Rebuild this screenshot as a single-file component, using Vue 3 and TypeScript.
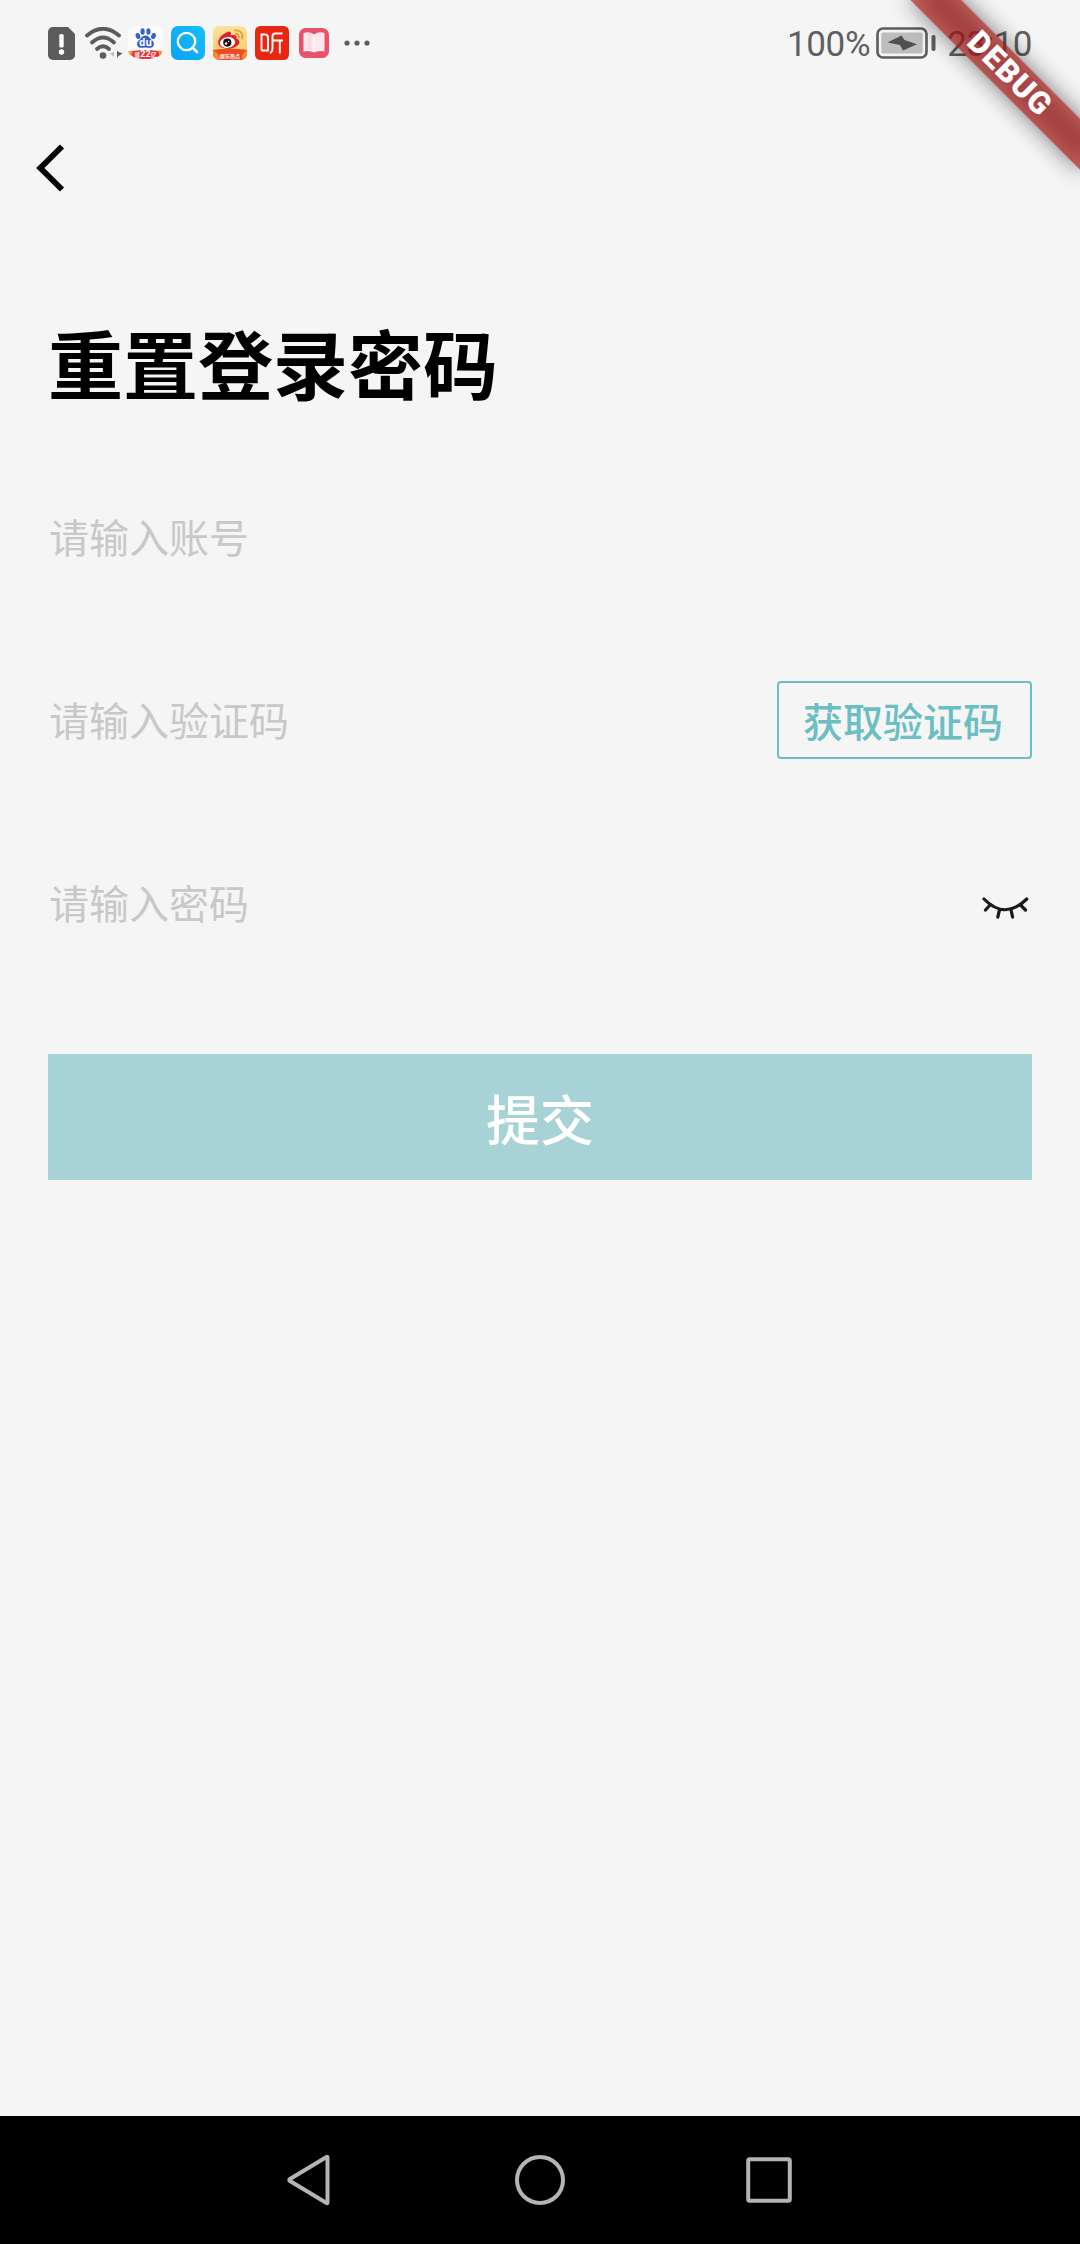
<script setup lang="ts">
import { ref } from 'vue'

const account = ref('')
const code = ref('')
const password = ref('')
</script>

<template>
  <div class="screen">
    <header class="status">
      <div class="apps">
        <svg class="warn" width="27" height="33" viewBox="0 0 27 33">
          <path d="M5 0H20L27 7V28a5 5 0 0 1-5 5H5a5 5 0 0 1-5-5V5a5 5 0 0 1 5-5Z" fill="#5c5c5c" />
          <rect x="11.3" y="7" width="4.4" height="13.5" rx="1.6" fill="#fff" />
          <circle cx="13.5" cy="25" r="2.7" fill="#fff" />
        </svg>
        <svg class="wifi" width="38" height="33" viewBox="0 0 38 33">
          <g fill="none" stroke="#5c5c5c" stroke-width="3.8" stroke-linecap="round">
            <path d="M2 8.500Q18-5 34 8.500" />
            <path d="M7 15.500Q18 5.500 29 15.500" />
            <path d="M12 22Q18 16.500 24 22" />
          </g>
          <circle cx="18" cy="28.500" r="3.300" fill="#5c5c5c" />
          <path d="M29 24.500v5l-4-2.500Z" fill="#bbb" />
          <path d="M32 23.500v7.500l1.500-2L37.500 26.500l-4-1.500Z" fill="#5c5c5c" />
        </svg>
        <svg class="baidu" width="35" height="34" viewBox="0 0 35 34">
          <rect x="0" y="0" width="35" height="34" rx="7" fill="#fbfbfc" />
          <g fill="#3563c9">
            <ellipse cx="10" cy="10" rx="2.300" ry="3.100" transform="rotate(-18 10 10)" />
            <ellipse cx="14.600" cy="5.500" rx="2.100" ry="3.300" />
            <ellipse cx="20.400" cy="5.500" rx="2.100" ry="3.300" />
            <ellipse cx="25.500" cy="10" rx="2.300" ry="3.100" transform="rotate(18 25.500 10)" />
            <path d="M17.500 9.500c4 0 4.500 3.500 6.500 4.800 2.800 2 2.700 6.700-1 7.400-2 .4-3.700-.1-5.500-.1s-3.500.5-5.500.1c-3.700-.7-3.800-5.400-1-7.400 2-1.300 2.500-4.800 6.500-4.800Z" />
          </g>
          <text x="17.500" y="20" class="du">du</text>
          <path d="M.5 25.500Q17.500 22.500 34.500 25.500 32 33 17.500 33 3 33 .5 25.500Z" fill="#e9313a" />
          <path d="M.5 25.500Q2 24.700 5 24.500L3.500 29.500Q1 27.500 .5 25.500ZM34.500 25.500Q33 24.700 30 24.500L31.500 29.500Q34 27.500 34.500 25.500Z" fill="#f59a3c" />
          <text x="17.500" y="31.300" class="promo"><tspan class="tiny">省</tspan>22<tspan class="tiny">亿</tspan></text>
        </svg>
        <svg class="search" width="34" height="34" viewBox="0 0 34 34">
          <defs>
            <linearGradient id="sky" x1="1" y1="0" x2="0" y2="1">
              <stop offset="0" stop-color="#16bffb" />
              <stop offset="1" stop-color="#0ba2f2" />
            </linearGradient>
          </defs>
          <rect width="34" height="34" rx="7" fill="url(#sky)" />
          <circle cx="15.500" cy="15.500" r="8.700" fill="none" stroke="#fff" stroke-width="2.300" />
          <path d="M21.500 21.500 26 26" stroke="#fff" stroke-width="2.500" stroke-linecap="round" />
        </svg>
        <svg class="weibo" width="34" height="34" viewBox="0 0 34 34">
          <defs>
            <linearGradient id="sun" x1="0" y1="0" x2="0" y2="1">
              <stop offset="0" stop-color="#fbe39a" />
              <stop offset="1" stop-color="#f8c75f" />
            </linearGradient>
            <clipPath id="tile"><rect width="34" height="34" rx="6.500" /></clipPath>
          </defs>
          <g clip-path="url(#tile)">
            <rect width="34" height="34" fill="url(#sun)" />
            <path d="M0 24Q17 21 34 24V34H0Z" fill="#ee4a22" />
            <path d="M0 24Q8 29 7 34H0ZM34 24Q28 28 29 34H34Z" fill="#f58a35" />
            <path d="M5 16C6 11 12 6 16 5.500 18.500 5.500 18 8.500 18 9.500 21 8.500 24.500 9 23.500 12.500 28 14.500 26.500 18 24 20 19 24 5 24 5 16Z" fill="#d8242d" />
            <ellipse cx="14.500" cy="16.500" rx="7.600" ry="5.400" fill="#fff" transform="rotate(-8 14.500 16.500)" />
            <circle cx="14.300" cy="16.600" r="4.100" fill="#15100f" />
            <circle cx="13" cy="17.500" r="1.200" fill="#fff" />
            <circle cx="15.600" cy="15.500" r=".7" fill="#fff" />
            <g fill="none" stroke="#e5a13d" stroke-width="1.800" stroke-linecap="round">
              <path d="M22 4.500C27 3.500 30.500 7.500 29 12.500" />
              <path d="M22.500 8C25 7.500 26.500 9.500 25.800 12" />
            </g>
            <text x="17" y="32" class="slogan">娱乐热点</text>
          </g>
        </svg>
        <svg class="ting" width="34" height="34" viewBox="0 0 34 34">
          <rect width="34" height="34" rx="5.500" fill="#e92711" />
          <g fill="none" stroke="#fff" stroke-width="1.900">
            <path d="M6.500 24.500V8.500H10a3 3 0 0 1 3 3V24.500H6.500" />
            <path d="M27.500 7.500H20.500a3 3 0 0 0-3 3V22q0 4-2.500 5M17.500 14.500H28M24.800 14.500V27.500" />
          </g>
        </svg>
        <svg class="book" width="30" height="30" viewBox="0 0 30 30">
          <rect width="30" height="30" rx="6.500" fill="#e9536a" />
          <path d="M4.500 5Q10.500 3 15 6.500 19.500 3 25.500 5V23.500Q19.500 22 15 24.500 10.500 22 4.500 23.500Z" fill="#fde8ed" />
          <path d="M8 5H12.500V22H8Z" fill="#fbdbe2" />
          <path d="M15 6.500V24" stroke="#fff" stroke-width="1" />
        </svg>
        <svg class="more" width="26" height="6" viewBox="0 0 26 6" fill="#5c5c5c">
          <circle cx="3" cy="3" r="2.600" />
          <circle cx="13" cy="3" r="2.600" />
          <circle cx="23" cy="3" r="2.600" />
        </svg>
      </div>
      <div class="system">
        <span class="percent">100%</span>
        <svg class="battery" width="60" height="32" viewBox="0 0 60 32">
          <rect x="1.500" y="1.500" width="49" height="29" rx="5.500" fill="none" stroke="#5c5c5c" stroke-width="2.600" />
          <rect x="5.300" y="5.500" width="41.400" height="21" rx="2" fill="#bdbdbd" />
          <path d="M11.500 15.500 25.500 8.500 28.500 13 41 17.300 27 23.500 24 18Z" fill="#4f4f4f" />
          <rect x="55.500" y="8" width="4" height="16" rx="1.800" fill="#5c5c5c" />
        </svg>
        <span class="time">23:10</span>
      </div>
    </header>

    <nav class="bar">
      <button class="back" aria-label="返回">
        <svg width="30" height="50" viewBox="0 0 30 50">
          <path d="M26 3.500 4.300 25 26 46.500" fill="none" stroke="#000" stroke-width="5.800" />
        </svg>
      </button>
    </nav>

    <main class="content">
      <h1>重置登录密码</h1>
      <form @submit.prevent>
        <div class="row">
          <input v-model="account" type="text" placeholder="请输入账号" />
        </div>
        <div class="row">
          <input v-model="code" type="text" placeholder="请输入验证码" />
          <button type="button" class="send">获取验证码</button>
        </div>
        <div class="row">
          <input v-model="password" type="password" placeholder="请输入密码" />
          <svg class="eye" width="52" height="24" viewBox="0 0 52 24" fill="none" stroke="#1a1a1a" stroke-width="3.200" stroke-linecap="round">
            <path d="M4 3Q25 24.500 46.800 3" />
            <path d="M10 9 5.500 14M19.500 14 17.800 21M31 14 32.600 21M40.500 9 45.500 14" />
          </svg>
        </div>
        <button type="submit" class="submit">提交</button>
      </form>
    </main>

    <footer class="keys">
      <svg width="44" height="52" viewBox="0 0 44 52">
        <path d="M41.500 3.500V48.500Q41.500 49.500 40.500 49L4 27Q2.500 26 4 25L40.500 3Q41.500 2.500 41.500 3.500Z" />
      </svg>
      <svg width="50" height="50" viewBox="0 0 50 50"><circle cx="25" cy="25" r="23" /></svg>
      <svg width="46" height="46" viewBox="0 0 46 46"><rect x="2.200" y="2.200" width="41.600" height="41.600" rx="1.500" /></svg>
    </footer>

    <div class="corner">
      <div class="ribbon">
        <div class="shade"></div>
        <div class="band">DEBUG</div>
      </div>
    </div>
  </div>
</template>

<style>
body {
  margin: 0;
}
</style>

<style scoped>
.screen {
  position: relative;
  display: flex;
  flex-direction: column;
  width: 1080px;
  height: 2244px;
  overflow: hidden;
  background: #f5f5f5;
  font-family: Roboto, "Noto Sans CJK SC", sans-serif;
}
button,
input {
  margin: 0;
  padding: 0;
  border: 0;
  background: none;
  font-family: inherit;
  outline: none;
}
svg {
  display: block;
  flex: none;
}
.status {
  display: flex;
  justify-content: space-between;
  align-items: center;
  height: 86px;
  box-sizing: border-box;
  padding: 0 48px;
}
.apps,
.system {
  display: flex;
  align-items: center;
}
.wifi { margin-left: 10px; }
.baidu { margin-left: 5px; }
.search { margin-left: 8px; }
.weibo { margin-left: 8px; }
.ting { margin-left: 8px; }
.book { margin-left: 10px; }
.more { margin-left: 15px; }
.du {
  fill: #fff;
  font: 700 10px "Noto Sans", sans-serif;
  text-anchor: middle;
}
.promo {
  fill: #fff;
  font: 700 9px Roboto, sans-serif;
  text-anchor: middle;
}
.tiny {
  font: 700 6px "Noto Sans CJK SC", sans-serif;
}
.slogan {
  fill: #fff;
  font: 700 5px "Noto Sans CJK SC", sans-serif;
  text-anchor: middle;
}
.percent,
.time {
  padding-top: 3px;
  color: #5f5f5f;
  font-size: 35px;
  line-height: 40px;
  white-space: nowrap;
}
.percent {
  letter-spacing: -0.300px;
}
.time {
  letter-spacing: -0.500px;
}
.battery {
  margin: 0 11px 0 6px;
}
.bar {
  height: 164px;
  padding-left: 36px;
}
.back {
  display: block;
  margin-top: 57px;
}
.content {
  padding: 0 48px;
  flex: 1;
}
h1 {
  margin: 63px 0 0;
  font-size: 75px;
  line-height: 110px;
  font-weight: 700;
  color: #000;
}
form {
  display: flex;
  flex-direction: column;
  padding-top: 24px;
}
.row {
  display: flex;
  align-items: center;
  height: 183px;
}
input {
  flex: 1;
  min-width: 0;
  height: 60px;
  padding: 2px 0 0 1px;
  font-size: 40px;
  color: #222;
}
input::placeholder {
  color: #c8c8c8;
  opacity: 1;
}
.send {
  width: 255px;
  height: 78px;
  margin-bottom: 3px;
  padding: 0 3px 1px 0;
  border: 2px solid #6bbec2;
  border-radius: 4px;
  color: #6bbec2;
  font-size: 40px;
  font-weight: 500;
}
.eye {
  margin-top: 6px;
}
.submit {
  height: 126px;
  margin-top: 58px;
  background: #a7d2d6;
  color: #fff;
  font-size: 54px;
  font-weight: 500;
}
.keys {
  display: flex;
  align-items: center;
  justify-content: center;
  height: 128px;
  background: #000;
}
.keys svg {
  fill: none;
  stroke: #b4b4b4;
  stroke-width: 4;
}
.keys svg + svg {
  margin-left: 185px;
}
.keys svg:last-child {
  margin-left: 181px;
  margin-right: 2px;
}
.corner {
  position: absolute;
  top: 0;
  right: 0;
  width: 300px;
  height: 300px;
  overflow: hidden;
  pointer-events: none;
}
.ribbon {
  position: absolute;
  left: 180px;
  top: 84px;
  width: 240px;
  height: 36px;
  transform-origin: 120px -84px;
  transform: rotate(45deg);
}
.shade {
  position: absolute;
  inset: 0;
  background: rgba(0, 0, 0, 0.5);
  filter: blur(11.900px);
}
.band {
  position: absolute;
  inset: 0;
  background: rgba(183, 28, 28, 0.630);
  color: #fff;
  font-size: 31px;
  font-weight: 900;
  line-height: 36px;
  letter-spacing: 1.200px;
  text-indent: 5px;
  text-align: center;
}
</style>
